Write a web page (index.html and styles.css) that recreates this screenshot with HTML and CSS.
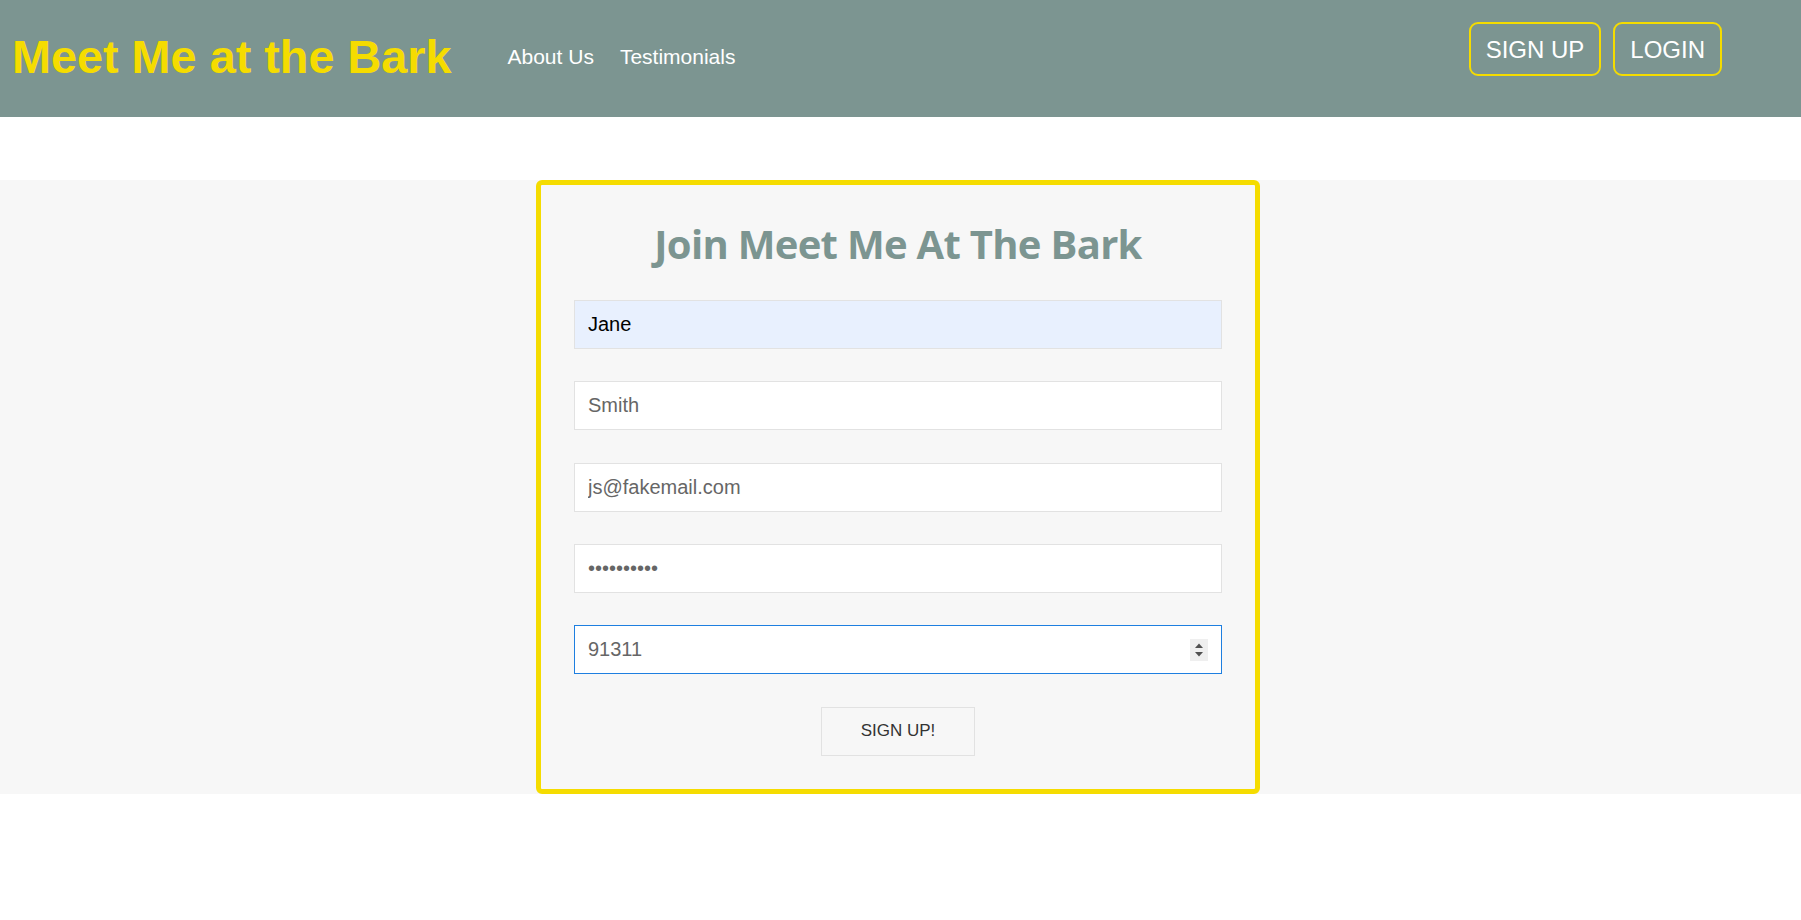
FILE: index.html
```html
<!DOCTYPE html>
<html lang="en">
<head>
<meta charset="utf-8">
<title>Meet Me at the Bark</title>
<link rel="stylesheet" href="styles.css">
</head>
<body>
<header class="topbar">
  <a class="logo" href="#">Meet Me at the Bark</a>
  <nav class="nav">
    <a class="nav-link" href="#">About Us</a>
    <a class="nav-link" href="#">Testimonials</a>
  </nav>
  <div class="auth">
    <a class="auth-btn" href="#">SIGN UP</a>
    <a class="auth-btn" href="#">LOGIN</a>
  </div>
</header>
<main class="band">
  <form class="card">
    <h1 class="card-title">Join Meet Me At The Bark</h1>
    <input class="field field-autofill" type="text" value="Jane">
    <input class="field" type="text" value="Smith">
    <input class="field" type="email" value="js@fakemail.com">
    <input class="field" type="password" value="abcdefghij">
    <div class="zip">
      <input class="field field-focus" type="number" value="91311">
      <span class="spin" aria-hidden="true">
        <svg width="18" height="22" viewBox="0 0 18 22">
          <polygon points="5,9 13,9 9,4.5" fill="#505050"/>
          <polygon points="5,13 13,13 9,17.5" fill="#505050"/>
        </svg>
      </span>
    </div>
    <button class="submit" type="button">SIGN UP!</button>
  </form>
</main>
</body>
</html>
```
FILE: styles.css
```css
* { box-sizing: border-box; }
html, body { margin: 0; padding: 0; background: #ffffff; }
body { font-family: "Liberation Sans", Arial, sans-serif; }

.topbar {
  display: flex;
  align-items: flex-start;
  height: 117px;
  padding: 0 79px 0 12px;
  background: #7c9591;
}
.logo {
  margin-top: 34px;
  font-size: 46.8px;
  line-height: 1;
  font-weight: 700;
  color: #f5dc00;
  text-decoration: none;
  white-space: nowrap;
}
.nav {
  display: flex;
  gap: 26px;
  margin-left: 56px;
  margin-top: 46px;
}
.nav-link {
  font-size: 21px;
  line-height: 1;
  color: #ffffff;
  text-decoration: none;
  white-space: nowrap;
}
.auth {
  display: flex;
  gap: 12px;
  margin-left: auto;
  margin-top: 22px;
}
.auth-btn {
  display: block;
  height: 54px;
  padding: 1px 15px 0;
  border: 2px solid #f5dc00;
  border-radius: 9px;
  font-size: 24px;
  line-height: 49px;
  color: #ffffff;
  text-decoration: none;
  white-space: nowrap;
}

.band {
  display: flex;
  justify-content: center;
  margin-top: 63px;
  padding-right: 5px;
  background: #f7f7f7;
}
.card {
  display: flex;
  flex-direction: column;
  gap: 32.4px;
  width: 724px;
  padding: 33px;
  border: 5px solid #f5dc00;
  border-radius: 6px;
  background: #f7f7f7;
}
.card-title {
  margin: 1.5px 0 0;
  font-family: "Open Sans", "Noto Sans", sans-serif;
  font-size: 40px;
  line-height: 48px;
  font-weight: 700;
  letter-spacing: -0.7px;
  color: #7c9591;
  text-align: center;
}
.field {
  display: block;
  width: 100%;
  height: 49px;
  padding: 0 13px;
  border: 1px solid #e2e2e2;
  border-radius: 0;
  background: #ffffff;
  font-family: "Liberation Sans", Arial, sans-serif;
  font-size: 20px;
  color: #666666;
  outline: none;
}
.field-autofill {
  background: #e8f0fe;
  color: #000000;
}
.zip {
  position: relative;
}
.field-focus {
  border-color: #1e7fe0;
  -moz-appearance: textfield;
}
.field-focus::-webkit-inner-spin-button,
.field-focus::-webkit-outer-spin-button {
  -webkit-appearance: none;
  margin: 0;
}
.spin {
  position: absolute;
  top: 14px;
  right: 14px;
  width: 18px;
  height: 22px;
  background: #efefef;
  display: flex;
}
.submit {
  display: block;
  width: 154px;
  height: 49px;
  margin: 0 auto;
  border: 1px solid #e2e2e2;
  background: #f7f7f7;
  font-family: "Liberation Sans", Arial, sans-serif;
  font-size: 17px;
  color: #333333;
}
```
